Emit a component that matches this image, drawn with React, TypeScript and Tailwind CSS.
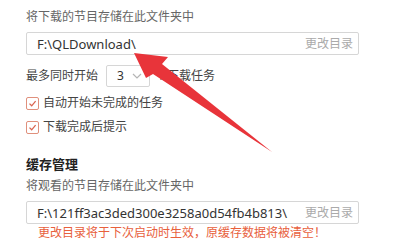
import React from 'react'

const font = { fontFamily: '"Noto Sans", "Noto Sans CJK SC", sans-serif' }

function Check({ label }: { label: string }) {
  return (
    <div className="flex items-center h-[16px] gap-[4px]">
      <span className="w-[13px] h-[13px] border border-[#e0907c] rounded-[2px] flex items-center justify-center bg-white">
        <svg width="9" height="9" viewBox="0 0 9 9">
          <path d="M1.5 4.6 L3.7 6.8 L7.6 2.2" fill="none" stroke="#d9644f" strokeWidth="1.3" />
        </svg>
      </span>
      <span className="text-[12px] leading-[16px] text-[#444]">{label}</span>
    </div>
  )
}

function PathBox({ path }: { path: string }) {
  return (
    <div className="w-[333px] h-[23px] border border-[#d6d6d6] rounded-[2px] flex items-center justify-between pl-[10px] pr-[5px]">
      <span className="text-[13px] leading-[16px] text-[#333]">{path}</span>
      <span className="text-[12px] leading-[16px] text-[#aaa]">更改目录</span>
    </div>
  )
}

export default function App() {
  return (
    <div className="w-[410px] h-[243px] bg-white overflow-hidden relative pl-[26px] pt-[9px]" style={font}>
      <p className="text-[12px] leading-[16px] text-[#666]">将下载的节目存储在此文件夹中</p>

      <div className="mt-[7px]">
        <PathBox path="F:\QLDownload\" />
      </div>

      <div className="mt-[10px] flex items-center h-[22px] text-[12px] text-[#444]">
        <span className="leading-[16px]">最多同时开始</span>
        <div className="ml-[8px] w-[44px] h-[22px] border border-[#d6d6d6] rounded-[2px] flex items-center justify-between pl-[10px] pr-[7px]">
          <span className="text-[12px] text-[#333]">3</span>
          <svg width="10" height="6" viewBox="0 0 10 6">
            <path d="M1 1 L5 5 L9 1" fill="none" stroke="#b5b5b5" strokeWidth="1.2" />
          </svg>
        </div>
        <span className="ml-[5px] leading-[16px]">个下载任务</span>
      </div>

      <div className="mt-[8px] flex flex-col gap-[8px]">
        <Check label="自动开始未完成的任务" />
        <Check label="下载完成后提示" />
      </div>

      <p className="mt-[21px] text-[13px] leading-[16px] font-bold text-[#222]">缓存管理</p>
      <p className="mt-[6px] text-[12px] leading-[16px] text-[#666]">将观看的节目存储在此文件夹中</p>

      <div className="mt-[7px]">
        <PathBox path="F:\121ff3ac3ded300e3258a0d54fb4b813\" />
      </div>

      <p className="mt-[1px] pl-[12px] text-[12px] leading-[16px] text-[#e8603c]">
        更改目录将于下次启动时生效，原缓存数据将被清空！
      </p>

      <svg className="absolute left-0 top-0 pointer-events-none" width="410" height="243" viewBox="0 0 410 243">
        <polygon
          points="134,53 168,57 162,64 272,152 153,74 146,78"
          fill="#e8343a"
        />
      </svg>
    </div>
  )
}
